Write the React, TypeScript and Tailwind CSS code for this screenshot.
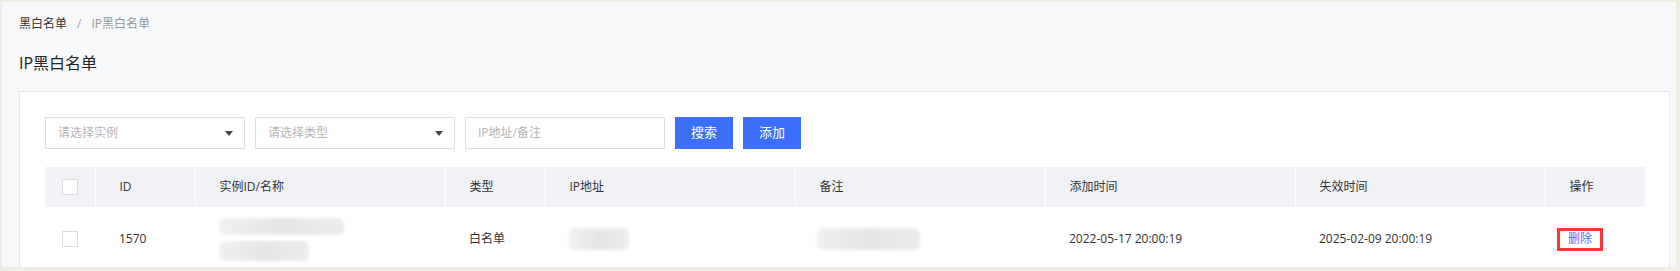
import { useState } from 'react';

const columns = [
  { key: 'check', label: '', width: 50 },
  { key: 'id', label: 'ID', width: 100 },
  { key: 'instance', label: '实例ID/名称', width: 250 },
  { key: 'type', label: '类型', width: 100 },
  { key: 'ip', label: 'IP地址', width: 250 },
  { key: 'remark', label: '备注', width: 250 },
  { key: 'created', label: '添加时间', width: 250 },
  { key: 'expired', label: '失效时间', width: 250 },
  { key: 'action', label: '操作', width: 100 },
];

function Checkbox() {
  return <span className="block w-4 h-4 border border-[#dcdcdc] bg-white mx-auto" />;
}

function Select({ placeholder }: { placeholder: string }) {
  return (
    <div className="w-[200px] h-8 border border-[#dcdcdc] bg-white flex items-center justify-between pl-3 pr-[11px] text-[#b5b5b5]">
      <span>{placeholder}</span>
      <svg width="8" height="5" viewBox="0 0 8 5">
        <path d="M0 0h8L4 5z" fill="#3d4450" />
      </svg>
    </div>
  );
}

// masked cell content
function Blur({ w, h }: { w: number; h: number }) {
  return (
    <div
      className="bg-gradient-to-r from-[#f0f0f0] via-[#e6e6e6] to-[#ececec] blur-[1.5px] rounded-[6px]"
      style={{ width: w, height: h }}
    />
  );
}

export default function App() {
  const [checked] = useState(false);

  return (
    <div
      className="w-[1680px] h-[271px] bg-[#efece4] pt-[2px] pl-[2px] pr-[4px] pb-[4px] overflow-hidden text-[12px] text-[#333]"
      style={{ fontFamily: '"Open Sans", "Noto Sans CJK SC", sans-serif' }}
    >
      <div className="h-full bg-[#f6f8fa] pl-[17px] pr-[6px] overflow-hidden">
        <div className="pt-[12px] h-[20px] box-content flex items-center gap-[10px]">
          <span className="text-[#333]">黑白名单</span>
          <span className="text-[#aaa]">/</span>
          <span className="text-[#999]">IP黑白名单</span>
        </div>
        <h1 className="mt-[17px] text-[16px] leading-[24px] text-[#222]">IP黑白名单</h1>
        <div className="mt-[16px] bg-white border border-[#e6e6e6] pt-[25px] pl-[25px] pr-[24px] h-[200px]">
          <div className="flex gap-[10px]">
            <Select placeholder="请选择实例" />
            <Select placeholder="请选择类型" />
            <div className="w-[200px] h-8 border border-[#dcdcdc] bg-white flex items-center pl-3 text-[#b5b5b5]">
              IP地址/备注
            </div>
            <button className="w-[58px] h-8 bg-[#3b6ef9] text-white text-[13px]">搜索</button>
            <button className="w-[58px] h-8 bg-[#3b6ef9] text-white text-[13px]">添加</button>
          </div>
          <table className="mt-[18px] w-[1600px] table-fixed border-collapse">
            <colgroup>
              {columns.map(c => (
                <col key={c.key} style={{ width: c.width }} />
              ))}
            </colgroup>
            <thead>
              <tr className="h-10 bg-[#f0f2f5]">
                {columns.map((c, i) => (
                  <th
                    key={c.key}
                    className={`font-normal text-left ${i < columns.length - 1 ? 'border-r border-white' : ''} ${c.key === 'check' ? 'px-0' : 'pl-6'}`}
                  >
                    {c.key === 'check' ? <Checkbox /> : c.label}
                  </th>
                ))}
              </tr>
            </thead>
            <tbody>
              <tr className="h-16">
                <td>{!checked && <Checkbox />}</td>
                <td className="pl-6">1570</td>
                <td className="pl-6">
                  <div className="flex flex-col gap-[6px]">
                    <Blur w={125} h={17} />
                    <Blur w={90} h={20} />
                  </div>
                </td>
                <td className="pl-6">白名单</td>
                <td className="pl-6">
                  <Blur w={60} h={22} />
                </td>
                <td className="pl-[22px]">
                  <Blur w={103} h={22} />
                </td>
                <td className="pl-6">2022-05-17 20:00:19</td>
                <td className="pl-6">2025-02-09 20:00:19</td>
                <td className="pl-3">
                  <span className="inline-flex items-center justify-center w-[46px] h-[23px] border-[3px] border-[#ff3535] text-[#5070f5]">
                    删除
                  </span>
                </td>
              </tr>
            </tbody>
          </table>
        </div>
      </div>
    </div>
  );
}
